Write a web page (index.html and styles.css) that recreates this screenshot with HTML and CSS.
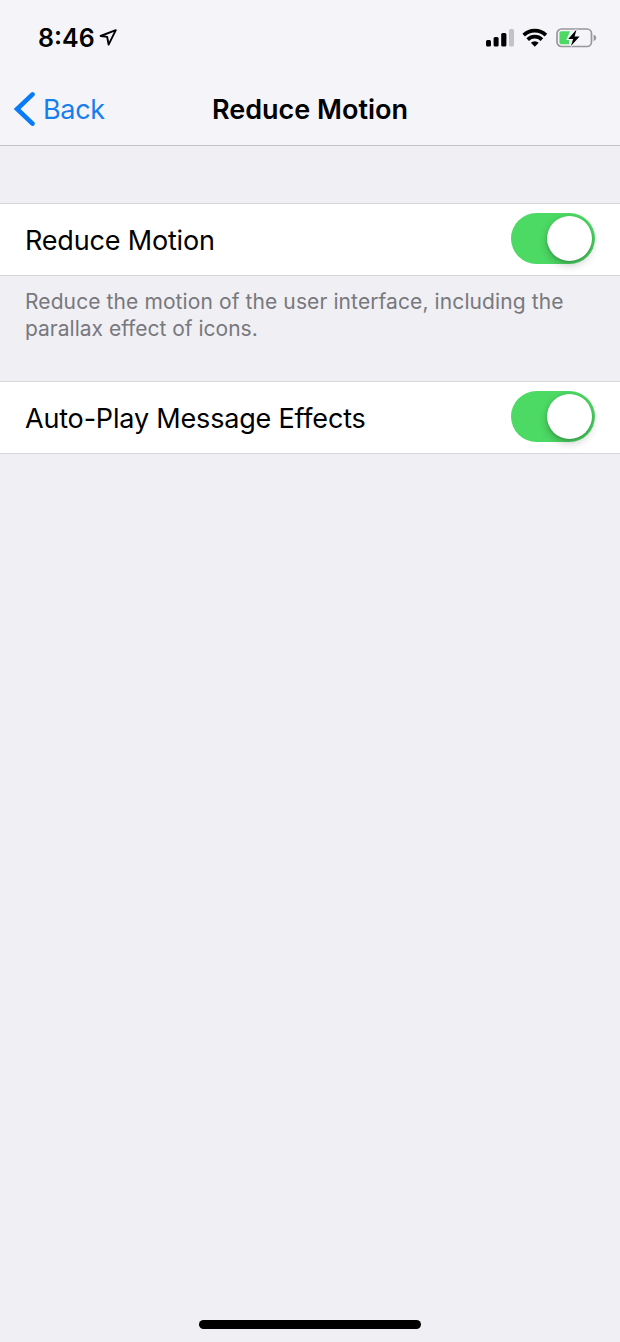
FILE: index.html
```html
<!DOCTYPE html>
<html lang="en">
<head>
<meta charset="utf-8">
<title>Reduce Motion</title>
<link rel="stylesheet" href="styles.css">
</head>
<body>
<div class="screen">
  <header class="header">
    <div class="status">
      <div class="status-left">
        <span class="time">8:46</span>
        <svg class="location" width="18" height="18" viewBox="0 0 18 18"><path d="M1.6 7 16.8 1.2 9.6 15.6 8.2 7.9Z" fill="none" stroke="#000" stroke-width="1.9" stroke-linejoin="round"/></svg>
      </div>
      <div class="status-right">
        <svg width="29" height="20" viewBox="0 0 29 20"><rect x="0" y="12" width="5" height="6.5" rx="1.5"/><rect x="7.6" y="8.9" width="5" height="9.6" rx="1.5"/><rect x="15.2" y="5" width="5.2" height="13.5" rx="1.5"/><rect x="23" y="1" width="5" height="17.5" rx="1.5" fill="#c3c3c7"/></svg>
        <svg class="wifi" width="26" height="20" viewBox="0 0 26 20"><g fill="none" stroke="#000" stroke-width="3.7"><path d="M1.7 7.1a16 16 0 0 1 22.2 0"/><path d="M5.7 11.6a10.2 10.2 0 0 1 14.2 0"/></g><path d="M8.9 14.7a5.8 5.8 0 0 1 7.8 0L12.8 18.7Z"/></svg>
        <svg class="battery" width="41" height="20" viewBox="0 0 41 20"><rect x="1" y="1" width="34.5" height="17.5" rx="4.5" fill="none" stroke="#98989c" stroke-width="1.7"/><path d="M5.2 3.3H14L11 10.5H13V16.2H5.2Q3.4 16.2 3.4 14.4V5.1Q3.4 3.3 5.2 3.3Z" fill="#4cd964"/><path d="M20.5 1.6 12.2 11H17.2L14.9 18 23.6 8.6H18.6Z" stroke="#f5f5f9" stroke-width="2" paint-order="stroke"/><path d="M37.6 6.6Q40.3 7.4 40.3 9.8T37.6 13Z" fill="#98989c"/></svg>
      </div>
    </div>
    <nav class="nav">
      <a class="back"><svg width="22" height="36" viewBox="0 0 22 36"><path d="M18.5 3.4 3.2 18 18.5 32.6" fill="none" stroke="#087bf5" stroke-width="4.6" stroke-linecap="round"/></svg><span class="back-label">Back</span></a>
      <h1 class="title">Reduce Motion</h1>
    </nav>
  </header>
  <main class="settings">
    <section class="row">
      <span class="label">Reduce Motion</span>
      <span class="switch"><span class="knob"></span></span>
    </section>
    <p class="note"><span class="note-lead">Reduce the motion of the user interface, including the</span><br>parallax effect of icons.</p>
    <section class="row">
      <span class="label">Auto-Play Message Effects</span>
      <span class="switch"><span class="knob"></span></span>
    </section>
  </main>
  <div class="home-indicator"></div>
</div>
</body>
</html>
```
FILE: styles.css
```css
* { box-sizing: border-box; }
body { margin: 0; font-family: Inter, "Liberation Sans", sans-serif; color: #000; }
.screen { width: 620px; height: 1342px; background: #efeff4; display: flex; flex-direction: column; overflow: hidden; }
.header { height: 146px; background: #f5f5f9; border-bottom: 1px solid #c2c2c6; }
.status { height: 74px; padding: 0 23px 0 38px; display: flex; justify-content: space-between; }
.status-left, .status-right { display: flex; align-items: flex-start; }
.time { margin-top: 23px; font-size: 25px; line-height: 30px; font-weight: 600; width: 61px; white-space: nowrap; }
.location { margin-top: 29px; }
.status-right { padding-top: 28px; }
.wifi { margin-left: 7px; }
.battery { margin-left: 8px; }
.nav { height: 71px; display: grid; grid-template-columns: 1fr auto 1fr; align-items: start; }
.back { display: flex; align-items: flex-start; padding: 17px 0 0 14px; color: #177ef0; }
.back-label { margin: 2px 0 0 7px; font-size: 27px; line-height: 34px; letter-spacing: -.3px; }
.title { margin: 19px 0 0; font-size: 27px; line-height: 34px; font-weight: 600; white-space: nowrap; }
.settings { padding-top: 57px; flex: 1; }
.row { height: 73px; background: #fff; border: solid #d5d5da; border-width: 1px 0; padding: 0 25px; display: flex; align-items: flex-start; justify-content: space-between; }
.label { margin-top: 20px; font-size: 27px; line-height: 34px; letter-spacing: -.18px; white-space: nowrap; }
.switch { width: 84px; height: 51px; margin-top: 9px; border-radius: 26px; background: #4cd964; padding: 3px; display: flex; justify-content: flex-end; }
.knob { width: 45px; height: 45px; border-radius: 50%; background: #fff; box-shadow: 0 4px 9px rgba(0, 0, 0, .22), 0 1px 3px rgba(0, 0, 0, .18); }
.note { margin: 0; height: 105px; padding: 13px 25px 0; font-size: 21px; line-height: 26.5px; color: #78787d; white-space: nowrap; }
.note-lead { letter-spacing: .1px; }
.home-indicator { width: 222px; height: 9px; margin: 0 0 13px 199px; border-radius: 5px; background: #000; }
```
